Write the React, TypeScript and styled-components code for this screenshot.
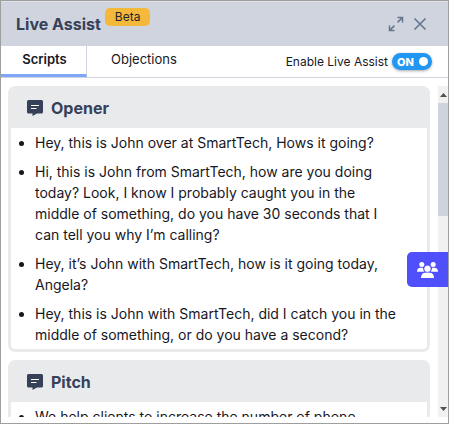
import React, { useState } from "react";
import styled, { createGlobalStyle } from "styled-components";

const GlobalStyle = createGlobalStyle`
  *, *::before, *::after { box-sizing: border-box; }
  body {
    margin: 0;
    background: #fff;
    color: #17171f;
    font-family: Inter, "Liberation Sans", sans-serif;
    font-size: 14px;
  }
  button { font: inherit; color: inherit; border: 0; background: none; padding: 0; cursor: pointer; }
  svg { display: block; }
`;

const Panel = styled.main`
  position: relative;
  display: flex;
  flex-direction: column;
  height: 100vh;
  padding-bottom: 6px;
  border: 1px solid #9e9e9e;
  overflow: hidden;
`;

const Header = styled.header`
  display: flex;
  align-items: center;
  flex: none;
  height: 45px;
  padding: 0 20px 0 15px;
  background: #d0d4de;
  border-top: 1px solid #dde0e6;
`;

const Title = styled.h1`
  margin: 0;
  font-size: 16px;
  line-height: 24px;
  font-weight: 700;
  color: #364159;
`;

const Badge = styled.span`
  align-self: flex-start;
  margin: 6px auto 0 4px;
  padding: 0 10px;
  border-radius: 5px;
  background: #f4b93b;
  font-size: 12px;
  line-height: 18px;
  color: #1f2430;
`;

const HeaderActions = styled.div`
  display: flex;
  align-items: center;
  gap: 8px;
  color: #64748b;
`;

const TabBar = styled.nav`
  display: flex;
  flex: none;
  height: 32px;
  border-bottom: 1px solid #d0d4de;
`;

const Tab = styled.button<{ $active: boolean }>`
  padding: 0 20px 2px 24px;
  font-size: 13px;
  line-height: 20px;
  font-weight: ${(p) => (p.$active ? 600 : 400)};
  border-bottom: 3px solid ${(p) => (p.$active ? "#7ea6fc" : "transparent")};
  &:first-child { width: 86px; padding: 0 0 2px 2px; border-right: 1px solid #d0d4de; }
`;

const ToggleLabel = styled.label`
  display: flex;
  align-items: center;
  gap: 4px;
  margin-left: auto;
  padding-right: 16px;
  font-size: 12px;
  cursor: pointer;
`;

const Switch = styled.span<{ $on: boolean }>`
  position: relative;
  display: flex;
  align-items: center;
  justify-content: space-between;
  width: 40px;
  height: 17px;
  padding: 0 4px 0 5px;
  border-radius: 9px;
  background: ${(p) => (p.$on ? "#2196f3" : "#94a3b8")};
  box-shadow: 0 1px 3px rgba(0, 0, 0, 0.35);
  color: #fff;
  font-size: 11px;
  font-weight: 800;
`;

const SwitchInput = styled.input`
  position: absolute;
  inset: 0;
  width: 100%;
  height: 100%;
  margin: 0;
  opacity: 0;
  cursor: pointer;
`;

const Knob = styled.span`
  width: 9px;
  height: 9px;
  border-radius: 50%;
  background: #fff;
`;

const Body = styled.div`
  display: flex;
  flex: 1;
  min-height: 0;
  margin-top: 8px;
`;

const Cards = styled.div`
  display: flex;
  flex-direction: column;
  gap: 8px;
  flex: 1;
  min-width: 0;
  padding: 0 8px 8px 7px;
  overflow-y: auto;
  scrollbar-width: none;
`;

const Card = styled.section`
  flex: none;
  border: 3px solid #e9eaec;
  border-top: 0;
  border-radius: 7px;
  overflow: hidden;
`;

const CardHeader = styled.h2`
  display: flex;
  align-items: center;
  gap: 8px;
  margin: 0;
  height: 42px;
  padding: 2px 16px 0;
  background: #e9eaec;
  color: #364159;
  font-size: 16px;
  line-height: 24px;
  font-weight: 700;
`;

const Lines = styled.ul`
  display: flex;
  flex-direction: column;
  gap: 8px;
  margin: 0;
  padding: 4px 24px;
  line-height: 21px;
`;

const Scrollbar = styled.div`
  display: flex;
  flex-direction: column;
  flex: none;
  width: 10px;
  background: #f1f1f1;
  color: #505050;
`;

const ScrollArrow = styled.button`
  display: grid;
  place-items: center;
  height: 17px;
`;

const ScrollTrack = styled.div`
  flex: 1;
`;

const ScrollThumb = styled.div`
  height: 38%;
  background: #ced3de;
`;

const TeamButton = styled.button`
  position: absolute;
  right: 0;
  top: 251px;
  display: grid;
  place-items: center;
  width: 41px;
  height: 35px;
  border-radius: 5px 0 0 5px;
  background: #4f4ffb;
  color: #fff;
`;

const ExpandIcon = () => (
  <svg width="16" height="16" viewBox="0 0 16 16" fill="none" stroke="currentColor" strokeWidth="1.5">
    <path d="M9.6 6.4 14.2 1.8M9.5 1.5h5v5M6.4 9.6 1.8 14.2M1.5 9.5v5h5" />
  </svg>
);

const CloseIcon = () => (
  <svg width="16" height="16" viewBox="0 0 16 16" fill="none" stroke="currentColor" strokeWidth="1.6">
    <path d="m2.5 2.5 11 11m0-11-11 11" />
  </svg>
);

const ScriptIcon = () => (
  <svg width="16" height="16" viewBox="0 0 16 16" fill="none">
    <path d="M1.5 0h13A1.5 1.5 0 0 1 16 1.5v10.500a1.500 1.500 0 0 1-1.500 1.500H10L5.500 16v-2.500h-4A1.500 1.500 0 0 1 0 12V1.500A1.500 1.500 0 0 1 1.500 0Z" fill="#364159" />
    <path d="M4 5.500h8M4 8.500h5.500" stroke="#fff" strokeWidth="1.200" />
  </svg>
);

const TeamIcon = () => (
  <svg width="21" height="16" viewBox="0 0 21 16" fill="currentColor">
    <circle cx="4.800" cy="2.500" r="2.500" />
    <circle cx="16.200" cy="2.500" r="2.500" />
    <path d="M0 9.700C0 7 1.300 5.700 3.500 5.700h2.300L7 9.700Zm21 0c0-2.700-1.300-4-3.500-4h-2.300L14 9.700Z" />
    <circle cx="10.500" cy="6.800" r="3.600" stroke="#4f4ffb" strokeWidth=".7" />
    <path d="M4 16c0-3.400 1.600-5.200 4.500-5.200h4c2.900 0 4.500 1.800 4.500 5.200Z" />
  </svg>
);

const ArrowIcon = ({ down = false }: { down?: boolean }) => (
  <svg width="7" height="4" viewBox="0 0 7 4" fill="currentColor">
    <path d={down ? "M0 0h7L3.500 4Z" : "M0 4h7L3.500 0Z"} />
  </svg>
);

const scripts = [
  {
    title: "Opener",
    lines: [
      "Hey, this is John over at SmartTech, Hows it going?",
      "Hi, this is John from SmartTech, how are you doing today? Look, I know I probably caught you in the middle of something, do you have 30 seconds that I can tell you why I’m calling?",
      "Hey, it’s John with SmartTech, how is it going today, Angela?",
      "Hey, this is John with SmartTech, did I catch you in the middle of something, or do you have a second?",
    ],
  },
  { title: "Pitch", lines: ["We help clients to increase the number of phone"] },
];

export default function App() {
  const [tab, setTab] = useState("Scripts");
  const [on, setOn] = useState(true);
  return (
    <>
      <GlobalStyle />
      <Panel>
        <Header>
          <Title>Live Assist</Title>
          <Badge>Beta</Badge>
          <HeaderActions>
            <button aria-label="Expand"><ExpandIcon /></button>
            <button aria-label="Close"><CloseIcon /></button>
          </HeaderActions>
        </Header>
        <TabBar>
          {["Scripts", "Objections"].map((name) => (
            <Tab key={name} $active={tab === name} onClick={() => setTab(name)}>{name}</Tab>
          ))}
          <ToggleLabel>
            Enable Live Assist
            <Switch $on={on}>
              <SwitchInput type="checkbox" role="switch" aria-label="Enable Live Assist" checked={on} onChange={() => setOn(!on)} />
              {on ? "ON" : "OFF"}
              <Knob />
            </Switch>
          </ToggleLabel>
        </TabBar>
        <Body>
          <Cards>
            {scripts.map(({ title, lines }) => (
              <Card key={title}>
                <CardHeader><ScriptIcon />{title}</CardHeader>
                <Lines>{lines.map((line) => <li key={line}>{line}</li>)}</Lines>
              </Card>
            ))}
          </Cards>
          <Scrollbar>
            <ScrollArrow aria-label="Scroll up"><ArrowIcon /></ScrollArrow>
            <ScrollTrack><ScrollThumb /></ScrollTrack>
            <ScrollArrow aria-label="Scroll down"><ArrowIcon down /></ScrollArrow>
          </Scrollbar>
        </Body>
        <TeamButton aria-label="Team"><TeamIcon /></TeamButton>
      </Panel>
    </>
  );
}
